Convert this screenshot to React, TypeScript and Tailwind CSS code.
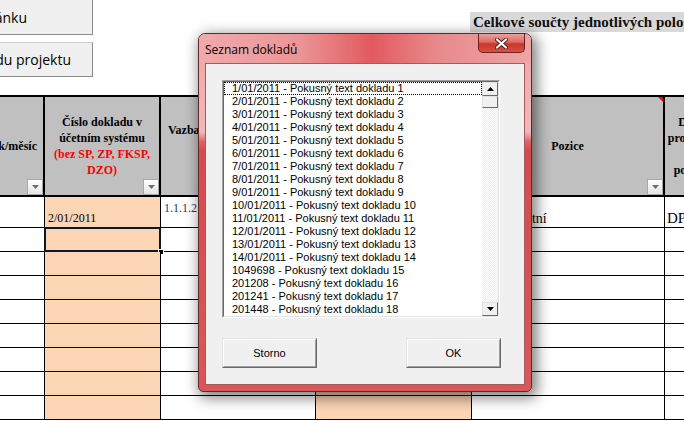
import React from 'react';

const docs: string[] = [
  ...Array.from({ length: 14 }, (_, i) => `${i + 1}/01/2011 - Pokusný text dokladu ${i + 1}`),
  '1049698 - Pokusný text dokladu 15',
  '201208 - Pokusný text dokladu 16',
  '201241 - Pokusný text dokladu 17',
  '201448 - Pokusný text dokladu 18',
];

// small Excel autofilter arrow in the header cells
const FilterButton: React.FC = () => (
  <div className="absolute right-0 bottom-0 flex h-[16px] w-[16px] items-center justify-center border border-[#a9a9a9] bg-[linear-gradient(#ffffff,#e4e4e4)]">
    <svg width="7" height="4" viewBox="0 0 7 4">
      <path d="M0 0h7L3.5 4z" fill="#707070" />
    </svg>
  </div>
);

const ScrollArrow: React.FC<{ up?: boolean }> = ({ up }) => (
  <div className="flex h-[14px] items-center justify-center border border-t-[#e3e3e3] border-l-[#e3e3e3] border-r-[#696969] border-b-[#696969] bg-[#f0f0f0]">
    <svg width="7" height="4" viewBox="0 0 7 4">
      <path d={up ? 'M0 4h7L3.5 0z' : 'M0 0h7L3.5 4z'} fill="#000" />
    </svg>
  </div>
);

const DialogButton: React.FC<{ label: string }> = ({ label }) => (
  <div className="h-[30px] w-[95px] border border-t-[#e3e3e3] border-l-[#e3e3e3] border-r-[#696969] border-b-[#696969]">
    <div className="flex h-full w-full items-center justify-center border border-t-white border-l-white border-r-[#a0a0a0] border-b-[#a0a0a0] bg-[#f0f0f0] font-['Liberation_Sans',sans-serif] text-[11px] text-black">
      {label}
    </div>
  </div>
);

const DocumentDialog: React.FC = () => (
  <div className="absolute left-[198px] top-[33px] flex h-[359px] w-[334px] flex-col rounded-t-[7px] rounded-b-[5px] border border-[#5e2a2c] bg-[linear-gradient(180deg,#eea5a6_0px,#f2b8b8_98px,#db6266_108px,#d44b4f_116px,#d9575a_100%)] shadow-[3px_4px_14px_2px_rgba(0,0,0,0.5)]">
    {/* title bar */}
    <div className="relative flex h-[29px] items-center rounded-t-[6px] bg-[linear-gradient(90deg,#f0aaab_0%,#ec9597_30%,#e25a5f_52%,#e88a8c_72%,#eea4a5_100%)] pl-[6px] pt-[3px]">
      <span className="font-['Open_Sans',sans-serif] text-[12px] text-black">Seznam dokladů</span>
      <div className="absolute right-[6px] top-0 flex h-[19px] w-[47px] items-center justify-center rounded-b-[5px] border border-t-0 border-[#6e1f1f] bg-[linear-gradient(180deg,#eaa19c_0%,#dd6a61_45%,#c8372c_55%,#d9503f_100%)]">
        <svg width="13" height="11" viewBox="0 0 13 11">
          <path d="M2 1.5l9 8M11 1.5l-9 8" stroke="#5a1a1a" strokeWidth="4" strokeLinecap="round" />
          <path d="M2 1.5l9 8M11 1.5l-9 8" stroke="#fff" strokeWidth="2.2" strokeLinecap="round" />
        </svg>
      </div>
    </div>

    {/* client area */}
    <div className="mx-[6px] mb-[6px] flex-1 border border-[#a65a5c] bg-[#f0f0f0] pl-[16px] pt-[16px]">
      <div className="h-[238px] w-[278px] border border-t-[#a0a0a0] border-l-[#a0a0a0] border-r-white border-b-white">
        <div className="flex h-full w-full border border-t-[#696969] border-l-[#696969] border-r-[#e3e3e3] border-b-[#e3e3e3] bg-white">
          <div className="flex-1 overflow-hidden font-['Liberation_Sans',sans-serif] text-[11px] text-black">
            {docs.map((d, i) => (
              <div
                key={d}
                className={`h-[13px] whitespace-nowrap pl-[8px] leading-[13px] ${i === 0 ? 'outline-1 -outline-offset-1 outline-dotted outline-black' : ''}`}
              >
                {d}
              </div>
            ))}
          </div>
          <div className="flex w-[16px] flex-col">
            <ScrollArrow up />
            <div className="h-[12px] border border-t-[#e3e3e3] border-l-[#e3e3e3] border-r-[#696969] border-b-[#696969] bg-[#f0f0f0]" />
            <div className="flex-1 bg-[repeating-conic-gradient(#ececec_0%_25%,#ffffff_0%_50%)] bg-size-[2px_2px]" />
            <ScrollArrow />
          </div>
        </div>
      </div>

      <div className="mt-[20px] flex w-[279px] justify-between">
        <DialogButton label="Storno" />
        <DialogButton label="OK" />
      </div>
    </div>
  </div>
);

const App: React.FC = () => {
  const rows = Array.from({ length: 9 }, (_, i) => i);

  return (
    <div className="relative h-[421px] w-[684px] overflow-hidden bg-white font-['Liberation_Serif',serif] text-black">
      {/* top strip with macro buttons and sheet title */}
      <div className="flex h-[95px]">
        <div className="flex w-[93px] shrink-0 flex-col font-['Open_Sans',sans-serif] text-[14px] text-black">
          <div className="flex h-[35px] items-center justify-end overflow-hidden whitespace-nowrap border-r border-b border-[#8a8a8a] bg-[#f0f0f0] pr-[65px]">
            <span>Přejít na stránku</span>
          </div>
          <div className="mt-[7px] flex h-[35px] items-center justify-end overflow-hidden whitespace-nowrap border-t border-r border-b border-t-[#cfcfcf] border-r-[#8a8a8a] border-b-[#8a8a8a] bg-[#f0f0f0] pr-[21px]">
            <span>Přehled dokladu projektu</span>
          </div>
        </div>
        <div className="ml-[377px] mt-[12px] flex h-[20px] flex-1 items-center overflow-hidden whitespace-nowrap bg-[#d9d9d9] pl-[3px] text-[15px] font-bold text-[#111]">
          Celkové součty jednotlivých položek rozpočtu
        </div>
      </div>

      {/* header row */}
      <div className="grid w-[785px] grid-cols-[45px_116px_155px_156px_193px_120px] border-y-2 border-black text-[12px] font-bold leading-[16px]">
        <div className="relative flex h-[98px] items-center justify-end overflow-hidden whitespace-nowrap border-r-2 border-black bg-[#c0c0c0] pr-[6px]">
          Rok/měsíc
          <FilterButton />
        </div>
        <div className="relative flex h-[98px] flex-col items-center justify-center border-r-2 border-black bg-[#c0c0c0] text-center">
          <span>Číslo dokladu v</span>
          <span>účetním systému</span>
          <span className="text-[#ff0000]">(bez SP, ZP, FKSP,</span>
          <span className="text-[#ff0000]">DZO)</span>
          <FilterButton />
        </div>
        <div className="relative flex h-[98px] flex-col items-center justify-center whitespace-nowrap border-r-2 border-black bg-[#c0c0c0]">
          <span>Vazba na položku rozpočtu</span>
          <span>(číslo položky</span>
          <span>z rozpočtu)</span>
        </div>
        <div className="relative flex h-[98px] flex-col items-center justify-center border-r-2 border-black bg-[#c0c0c0]">
          <span>Částka</span>
          <span>v Kč</span>
        </div>
        <div className="relative flex h-[98px] items-center justify-center border-r-2 border-black bg-[#c0c0c0]">
          Pozice
          <div className="absolute right-0 top-0 h-0 w-0 border-t-[5px] border-l-[5px] border-t-[#ff0000] border-l-transparent" />
          <FilterButton />
        </div>
        <div className="relative flex h-[98px] w-[64px] flex-col items-center justify-center whitespace-nowrap bg-[#c0c0c0]">
          <span>Doklad</span>
          <span>prokazující</span>
          <span>na</span>
          <span>položkou</span>
        </div>
      </div>

      {/* data rows */}
      {rows.map((r) => (
        <div
          key={r}
          className={`grid w-[785px] grid-cols-[45px_116px_155px_156px_193px_120px] ${r === 0 ? 'h-[31px]' : 'h-[24px]'}`}
        >
          <div className="border-r border-b border-black" />
          <div className="relative flex items-end border-r border-b border-black bg-[#fcd5b4] pb-[2px] pl-[3px] text-[12px] leading-[14px]">
            {r === 0 && '2/01/2011'}
            {r === 1 && (
              <>
                <div className="absolute -left-[1px] -top-[1px] -right-[1px] -bottom-[1px] border-2 border-[#0b1a2a]" />
                <div className="absolute -right-[4px] -bottom-[4px] h-[6px] w-[6px] border border-white bg-black" />
              </>
            )}
          </div>
          <div className="border-r border-b border-black pl-[3px] pt-[5px] text-[12px] leading-[13px] text-[#1f3864]">
            {r === 0 && '1.1.1.2'}
          </div>
          <div className="border-r border-b border-black bg-[#fcd5b4]" />
          <div className="flex items-end whitespace-nowrap border-r border-b border-black pl-[2px] text-[14px] leading-[17px]">
            {r === 0 && 'Režie ostatní'}
          </div>
          <div className="flex items-end whitespace-nowrap border-b border-black pl-[2px] text-[15px] leading-[17px]">
            {r === 0 && 'DPH'}
          </div>
        </div>
      ))}

      <DocumentDialog />
    </div>
  );
};

export default App;
